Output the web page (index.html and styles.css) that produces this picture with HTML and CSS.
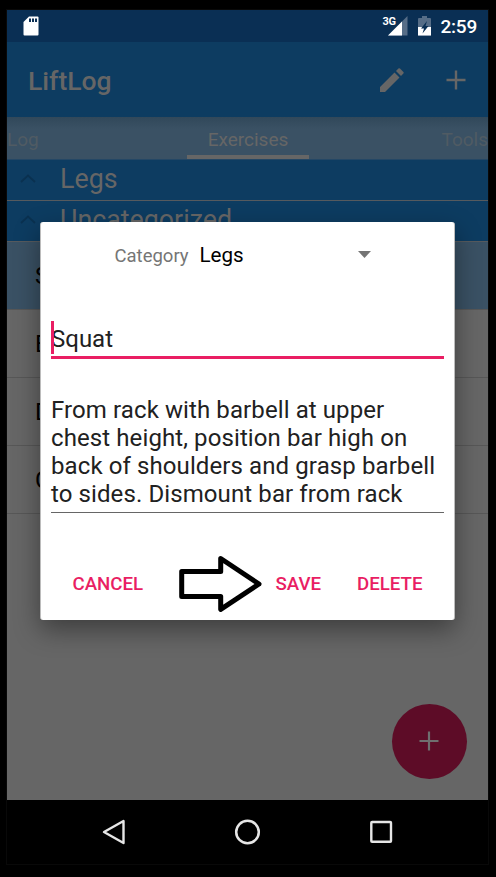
FILE: index.html
```html
<!DOCTYPE html>
<html lang="en">
<head>
<meta charset="utf-8">
<title>LiftLog</title>
<link rel="stylesheet" href="styles.css">
</head>
<body>
<div class="phone">
  <header class="status">
    <svg class="sd" width="16" height="20" viewBox="0 0 16 20"><path fill="#fff" d="M6 .5h8.500q1 0 1 1v17q0 1-1 1h-13q-1 0-1-1V6z"/><path fill="#0a2f54" d="M6 2.500h2V6H6zM9 2.500h2V6H9zM12 2.500h2V6h-2z"/></svg>
    <div class="indicators">
      <span class="net">3G</span>
      <svg class="signal" width="20" height="20" viewBox="0 0 20 20"><path fill="#566d87" d="M19.500 0v19.500H0z"/><path fill="#fff" d="M14 5.500v14H0z"/></svg>
      <svg class="battery" width="13" height="20" viewBox="0 0 13 20"><path fill="#566d87" d="M4 0h5v2h3q1 0 1 1v16q0 .5-.5.500H.5Q0 19.500 0 19V3q0-1 1-1h3z"/><path fill="#fff" d="M0 11h13v8.500H0z"/><path fill="#0a2f54" d="M9 5 3 12.500h3L4.500 17.500 10.500 10h-3z"/></svg>
      <span class="clock">2:59</span>
    </div>
  </header>
  <div class="appbar">
    <h1>LiftLog</h1>
    <svg class="pencil" width="26" height="26" viewBox="0 0 26 26"><path fill="#666" d="M1 20 15.500 5.500l5 5L6 25H1zM17 4 19.400 1.600q.8-.8 1.600 0l3.400 3.400q.8.800 0 1.600L22 9z"/></svg>
    <svg class="plus" width="20" height="20" viewBox="0 0 20 20"><path stroke="#666" stroke-width="2.400" d="M10 .5v19M.5 10h19"/></svg>
  </div>
  <nav class="tabs"><span class="tab side">Log</span><span class="tab active">Exercises</span><span class="tab side right">Tools</span></nav>
  <main class="list">
    <div class="group"><svg width="16" height="9" viewBox="0 0 16 9"><path fill="none" stroke="#0a3150" stroke-width="1.800" d="M1 8l7-6.500L15 8"/></svg><span>Legs</span></div>
    <div class="group"><svg width="16" height="9" viewBox="0 0 16 9"><path fill="none" stroke="#0a3150" stroke-width="1.800" d="M1 8l7-6.500L15 8"/></svg><span>Uncategorized</span></div>
    <div class="item selected">S</div>
    <div class="item">B</div>
    <div class="item">D</div>
    <div class="item">C</div>
  </main>
  <div class="fab"><svg width="20" height="20" viewBox="0 0 20 20"><path stroke="#6f6f6f" stroke-width="2.200" d="M10 .5v19M.5 10h19"/></svg></div>
  <footer class="navbar">
    <svg width="26" height="28" viewBox="0 0 26 28"><path fill="none" stroke="#e6e6e6" stroke-width="2.400" stroke-linejoin="round" d="M22.500 3v22L3 14z"/></svg>
    <svg width="28" height="28" viewBox="0 0 28 28"><circle cx="13.500" cy="14" r="11.300" fill="none" stroke="#e6e6e6" stroke-width="2.500"/></svg>
    <svg width="26" height="28" viewBox="0 0 26 28"><rect x="3.300" y="4" width="19.700" height="19.700" rx=".8" fill="none" stroke="#e6e6e6" stroke-width="2.400"/></svg>
  </footer>
  <section class="dialog">
    <div class="category"><span class="label">Category</span><span class="value">Legs</span><svg width="13" height="7" viewBox="0 0 13 7"><path fill="#757575" d="M0 0h13L6.500 7z"/></svg></div>
    <div class="name"><i class="cursor"></i>Squat</div>
    <div class="description">From rack with barbell at upper<br>chest height, position bar high on<br>back of shoulders and grasp barbell<br>to sides. Dismount bar from rack</div>
    <div class="actions">
      <span class="cancel">CANCEL</span>
      <svg class="arrow" width="84" height="58" viewBox="0 0 84 58"><path fill="none" stroke="#000" stroke-width="5" stroke-linejoin="round" d="M2.700 16.500H41.700V3.500L80 29 41.700 54.300V41.500H2.700z"/></svg>
      <span class="save">SAVE</span>
      <span class="delete">DELETE</span>
    </div>
  </section>
</div>
</body>
</html>
```
FILE: styles.css
```css
* { box-sizing: border-box; }
body {
  margin: 0;
  height: 877px;
  padding: 10px 8px 0 7px;
  background: #000;
  font-family: Roboto, "Liberation Sans", sans-serif;
  overflow: hidden;
}
svg { display: block; flex: none; }
.phone {
  position: relative;
  width: 481px;
  height: 854px;
  display: flex;
  flex-direction: column;
  background: #666;
  overflow: hidden;
  box-shadow: 0 0 0 1px #090909;
}
.status {
  height: 32px;
  flex: none;
  display: flex;
  justify-content: space-between;
  padding: 6px 11px 0 16px;
  background: #0a2f54;
  color: #fff;
}
.indicators { display: flex; }
.net { font-size: 11px; line-height: 12px; font-weight: 700; letter-spacing: -.5px; margin-right: -7px; }
.signal { margin-right: 10px; }
.battery { margin-right: 9px; }
.clock { font-size: 19px; line-height: 22px; font-weight: 500; letter-spacing: -.2px; }
.appbar {
  height: 75px;
  flex: none;
  display: flex;
  align-items: center;
  padding: 0 22px 0 21px;
  background: #0d3c61;
  color: #666;
}
h1 { margin: 3px auto 0 0; font-size: 26.500px; line-height: 32px; font-weight: 500; }
.pencil { margin-right: 41px; }
.tabs {
  height: 43px;
  flex: none;
  display: grid;
  grid-template-columns: 180px 122px 179px;
  background: linear-gradient(#31485a, #3a5164 12px);
  border-bottom: 1px solid #244765;
  font-size: 19px;
  line-height: 46px;
}
.side { color: #505b63; }
.right { text-align: right; }
.active { color: #666; text-align: center; border-bottom: 4px solid #666; height: 42px; }
.group {
  height: 41px;
  display: flex;
  align-items: center;
  gap: 24px;
  padding-left: 13px;
  border-bottom: 1px solid #565a5e;
  background: #0d3c61;
  color: #666;
  font-size: 26.800px;
  line-height: 38px;
}
.group svg { margin-top: -3px; }
.group span { margin-top: -3px; }
.item {
  height: 68px;
  padding-left: 28px;
  border-bottom: 1px solid #575757;
  font-size: 24px;
  line-height: 68px;
  color: #000;
}
.selected { background: #3a5164; }
.fab {
  position: absolute;
  left: 385px;
  top: 694px;
  width: 75px;
  height: 75px;
  border-radius: 50%;
  display: grid;
  place-items: center;
  padding: 0 1px 1px 0;
  background: #5d0c27;
}
.navbar {
  height: 64px;
  flex: none;
  margin-top: auto;
  display: flex;
  justify-content: space-between;
  padding: 18px 94px 0;
  background: #000;
}
.dialog {
  position: absolute;
  left: 33px;
  top: 212px;
  width: 415px;
  height: 398px;
  padding: 0 10px;
  border: solid #bcbcbc;
  border-width: 0 1px;
  border-radius: 3px;
  background: #fff;
  box-shadow: 0 10px 26px rgba(0, 0, 0, .4);
}
.category { height: 66px; display: flex; align-items: center; padding-left: 63.500px; }
.label { width: 85px; padding-top: 2px; font-size: 18.500px; color: #757575; }
.value { width: 158px; font-size: 20.600px; color: #000; }
.category svg { margin-top: -1px; }
.name {
  position: relative;
  margin-top: 33px;
  height: 38px;
  padding-top: 1px;
  border-bottom: 3px solid #e91e63;
  font-size: 24px;
  line-height: 35px;
  color: #212121;
}
.cursor { position: absolute; left: 0; top: 0; width: 3px; height: 33px; background: #e91e63; }
.description {
  margin-top: 37px;
  height: 117px;
  border-bottom: 1px solid #666;
  font-size: 24px;
  line-height: 28px;
  letter-spacing: .1px;
  color: #212121;
  white-space: nowrap;
}
.actions {
  margin-top: 42px;
  height: 58px;
  display: flex;
  align-items: center;
  padding-left: 21.500px;
  font-size: 18.700px;
  font-weight: 500;
  color: #e91e63;
}
.cancel { width: 106.500px; }
.arrow { margin-right: 12.500px; }
.save { width: 81.500px; }
```
